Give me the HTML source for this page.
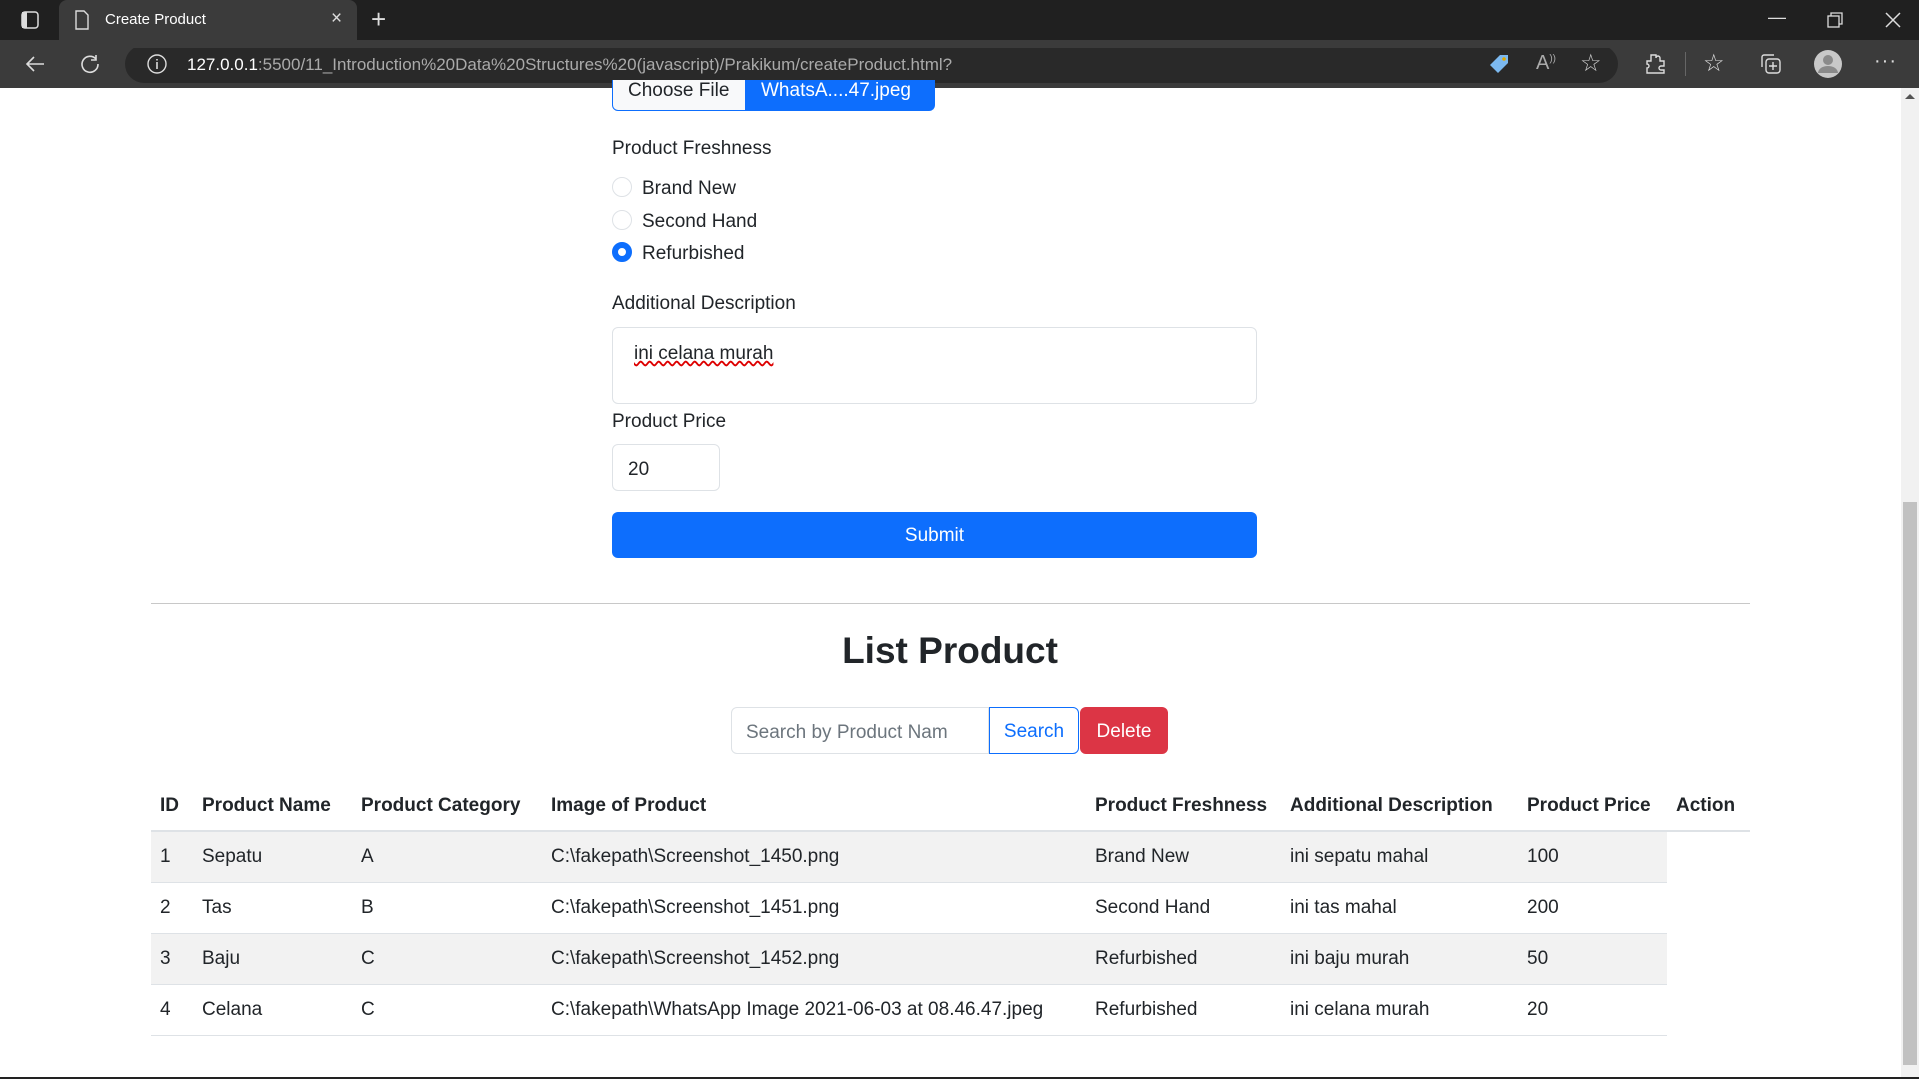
<!DOCTYPE html>
<html><head><meta charset="utf-8"><style>
*{box-sizing:border-box;margin:0;padding:0}
body{width:1919px;height:1079px;overflow:hidden;background:#fff;font-family:"Liberation Sans",sans-serif;color:#212529;position:relative;font-size:19px}
.a{position:absolute;white-space:nowrap}
.top{position:absolute;left:0;top:0;width:1919px;height:40px;background:#202020}
.tool{position:absolute;left:0;top:40px;width:1919px;height:48px;background:#3b3b3b}
.tab{position:absolute;left:59px;top:0;width:298px;height:40px;background:#3b3b3b;border-radius:8px 8px 0 0}
.addr{position:absolute;left:125px;top:45px;width:1493px;height:38px;background:#292929;border-radius:19px}
.lbl{font-size:19px}
.radio{position:absolute;left:612px;width:20px;height:20px;border-radius:50%;border:1px solid #dee2e6;background:#fff}
table{position:absolute;left:151px;top:780px;border-collapse:collapse;font-size:19px}
th{font-weight:bold;text-align:left;height:51px;padding:2px 9px 0;border-bottom:2px solid #dee2e6;white-space:nowrap}
td{height:51px;padding:1px 9px 0;border-bottom:1px solid #dee2e6;white-space:nowrap}
tr.s td{background:#f2f2f2}
</style></head><body>
<div class="top"></div>
<div class="tab"></div>
<svg class="a" style="left:20px;top:10px" width="20" height="20" viewBox="0 0 20 20"><rect x="2" y="2" width="16" height="16" rx="3" fill="none" stroke="#ddd" stroke-width="1.5"/><rect x="2" y="2" width="5" height="16" fill="#ddd"/></svg>
<svg class="a" style="left:74px;top:10px" width="16" height="20" viewBox="0 0 16 20"><path d="M2 1h8l4 4v14H2z" fill="none" stroke="#ddd" stroke-width="1.4"/></svg>
<div class="a" style="left:105px;top:11px;color:#fff;font-size:15px">Create Product</div>
<div class="a" style="left:331px;top:8px;color:#ddd;font-size:19px">×</div>
<div class="a" style="left:371px;top:4px;color:#ddd;font-size:26px;font-weight:300">+</div>
<div class="a" style="left:1768px;top:7px;color:#ddd;font-size:18px">—</div>
<svg class="a" style="left:1827px;top:12px" width="16" height="16"><rect x="1" y="4" width="11" height="11" fill="none" stroke="#ddd" stroke-width="1.3"/><path d="M4 4V1h11v11h-3" fill="none" stroke="#ddd" stroke-width="1.3"/></svg>
<svg class="a" style="left:1885px;top:12px" width="16" height="16"><path d="M1 1L15 15M15 1L1 15" stroke="#ddd" stroke-width="1.5"/></svg>
<div class="tool"></div>
<div class="addr"></div>
<svg class="a" style="left:24px;top:54px" width="22" height="20"><path d="M20 10H3M10 3L3 10l7 7" fill="none" stroke="#ddd" stroke-width="1.6"/></svg>
<svg class="a" style="left:79px;top:53px" width="22" height="22"><path d="M17 6A8 8 0 1 0 19 11" fill="none" stroke="#ddd" stroke-width="1.6"/><path d="M17 2v5h-5" fill="none" stroke="#ddd" stroke-width="1.6"/></svg>
<svg class="a" style="left:146px;top:53px" width="22" height="22"><circle cx="11" cy="11" r="9" fill="none" stroke="#ddd" stroke-width="1.4"/><path d="M11 9v7M11 6v1.5" stroke="#ddd" stroke-width="1.6"/></svg>
<div class="a" style="left:187px;top:55px;font-size:17px;color:#aaa"><span style="color:#fff">127.0.0.1</span>:5500/11_Introduction%20Data%20Structures%20(javascript)/Prakikum/createProduct.html?</div>
<svg class="a" style="left:1488px;top:53px" width="22" height="22"><path d="M12 2h8v8L10 20 2 12z" fill="#7cb9f0"/><circle cx="16" cy="6" r="1.8" fill="#e0a800"/></svg>
<div class="a" style="left:1536px;top:52px;color:#aaa;font-size:20px">A<sup style="font-size:10px">))</sup></div>
<div class="a" style="left:1580px;top:49px;color:#ccc;font-size:24px">☆</div>
<svg class="a" style="left:1643px;top:52px" width="24" height="24"><path d="M8 3h5v3a2 2 0 0 1 4 0V9h4v5h-3a2 2 0 0 0 0 4h3v3H4v-5a2 2 0 0 0 0-4V9h4z" fill="none" stroke="#ddd" stroke-width="1.4"/></svg>
<div class="a" style="left:1685px;top:52px;width:1px;height:24px;background:#666"></div>
<div class="a" style="left:1703px;top:49px;color:#ddd;font-size:24px">☆</div>
<svg class="a" style="left:1759px;top:52px" width="24" height="24"><rect x="7" y="7" width="14" height="14" rx="3" fill="none" stroke="#ddd" stroke-width="1.4"/><path d="M3 15V5a2 2 0 0 1 2-2h10M14 10v8M10 14h8" stroke="#ddd" fill="none" stroke-width="1.4"/></svg>
<svg class="a" style="left:1813px;top:49px" width="30" height="30"><circle cx="15" cy="15" r="14" fill="#c8c8c8"/><circle cx="15" cy="11" r="5" fill="#8a8a8a"/><path d="M5 24a10 7 0 0 1 20 0" fill="#8a8a8a"/></svg>
<div class="a" style="left:1874px;top:50px;color:#ddd;font-size:20px;letter-spacing:1px">···</div>

<!-- page -->
<div class="a" style="left:612px;top:80px;width:323px;height:31px;border:1px solid #0d6efd;border-top:none;border-radius:0 0 6px 6px;background:#0d6efd;overflow:hidden">
<div class="a" style="left:0;top:0;width:132px;height:31px;background:#f8f9fa"></div>
<div class="a" style="left:15px;top:0px;font-size:19px">Choose File</div>
<div class="a" style="left:148px;top:0px;font-size:19px;color:#fff">WhatsA....47.jpeg</div>
</div>
<div class="tool" style="z-index:2;height:8px"></div>
<div class="a lbl" style="left:612px;top:138px">Product Freshness</div>
<div class="radio" style="top:177px"></div><div class="a" style="left:642px;top:178px">Brand New</div>
<div class="radio" style="top:210px"></div><div class="a" style="left:642px;top:211px">Second Hand</div>
<div class="radio" style="top:242px;border:6px solid #0d6efd"></div><div class="a" style="left:642px;top:243px">Refurbished</div>
<div class="a lbl" style="left:612px;top:293px">Additional Description</div>
<div class="a" style="left:612px;top:327px;width:645px;height:77px;border:1px solid #dee2e6;border-radius:6px"></div>
<div class="a" style="left:634px;top:343px;text-decoration:underline wavy #d00;text-decoration-skip-ink:none">ini celana murah</div>
<div class="a lbl" style="left:612px;top:411px">Product Price</div>
<div class="a" style="left:612px;top:444px;width:108px;height:47px;border:1px solid #dee2e6;border-radius:6px"></div>
<div class="a" style="left:628px;top:459px">20</div>
<div class="a" style="left:612px;top:512px;width:645px;height:46px;background:#0d6efd;border-radius:6px;color:#fff;text-align:center;line-height:48px">Submit</div>
<div class="a" style="left:151px;top:603px;width:1599px;height:1px;background:#c8c8c8"></div>
<div class="a" style="left:0;width:1900px;top:630px;text-align:center;font-size:37px;font-weight:bold">List Product</div>
<div class="a" style="left:731px;top:707px;width:258px;height:47px;border:1px solid #dee2e6;border-radius:6px 0 0 6px"></div>
<div class="a" style="left:746px;top:722px;color:#6c757d">Search by Product Nam</div>
<div class="a" style="left:989px;top:707px;width:90px;height:47px;border:1px solid #0d6efd;border-radius:0 6px 6px 0;color:#0d6efd;text-align:center;line-height:48px">Search</div>
<div class="a" style="left:1080px;top:707px;width:88px;height:47px;background:#dc3545;border-radius:6px;color:#fff;text-align:center;line-height:49px">Delete</div>
<table>
<tr><th style="width:42px">ID</th><th style="width:159px">Product Name</th><th style="width:190px">Product Category</th><th style="width:544px">Image of Product</th><th style="width:195px">Product Freshness</th><th style="width:237px">Additional Description</th><th style="width:149px">Product Price</th><th style="width:83px">Action</th></tr>
<tr class="s"><td>1</td><td>Sepatu</td><td>A</td><td>C:\fakepath\Screenshot_1450.png</td><td>Brand New</td><td>ini sepatu mahal</td><td>100</td></tr>
<tr><td>2</td><td>Tas</td><td>B</td><td>C:\fakepath\Screenshot_1451.png</td><td>Second Hand</td><td>ini tas mahal</td><td>200</td></tr>
<tr class="s"><td>3</td><td>Baju</td><td>C</td><td>C:\fakepath\Screenshot_1452.png</td><td>Refurbished</td><td>ini baju murah</td><td>50</td></tr>
<tr><td>4</td><td>Celana</td><td>C</td><td>C:\fakepath\WhatsApp Image 2021-06-03 at 08.46.47.jpeg</td><td>Refurbished</td><td>ini celana murah</td><td>20</td></tr>
</table>
<div class="a" style="left:1901px;top:88px;width:18px;height:989px;background:#f1f1f1"></div>
<div class="a" style="left:1903px;top:502px;width:14px;height:563px;background:#c1c1c1"></div>
<div class="a" style="left:1905px;top:94px;width:0;height:0;border:5px solid transparent;border-bottom-color:#555;border-top:none"></div>
<div class="a" style="left:0;top:1077px;width:1919px;height:2px;background:#222"></div>
</body></html>
